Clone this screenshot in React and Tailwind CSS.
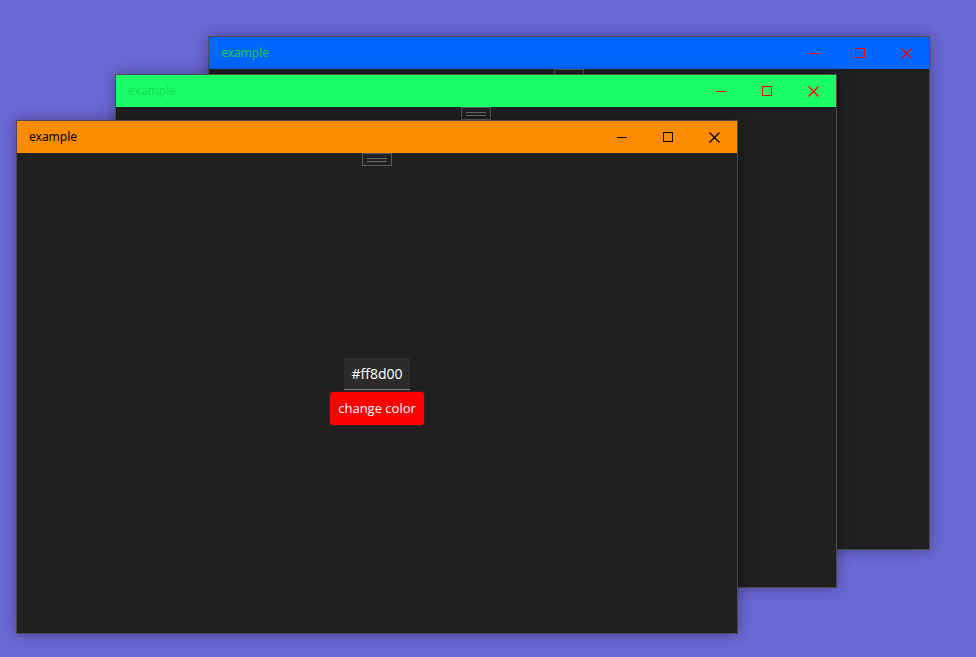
import React from "react";

function Win({ left, top, bar, text, icon, z, children }) {
  return (
    <div
      className="absolute w-[722px] h-[514px] border border-[#4b4b55] bg-[#202020] flex flex-col shadow-[0_0_14px_rgba(0,0,0,0.35)]"
      style={{ left, top, zIndex: z }}
    >
      <div className={`h-8 flex items-center shrink-0 ${bar}`}>
        <span className={`pl-3 text-[12px] font-['Noto_Sans',sans-serif] ${text}`}>example</span>
        <div className="ml-auto flex h-full">
          <div className="w-[46px] h-full flex items-center justify-center">
            <svg width="10" height="10" viewBox="0 0 10 10" shapeRendering="crispEdges">
              <line x1="0" y1="5.5" x2="10" y2="5.5" stroke={icon} strokeWidth="1" />
            </svg>
          </div>
          <div className="w-[46px] h-full flex items-center justify-center">
            <svg width="10" height="10" viewBox="0 0 10 10" shapeRendering="crispEdges">
              <rect x="0.5" y="0.5" width="9" height="9" fill="none" stroke={icon} strokeWidth="1" />
            </svg>
          </div>
          <div className="w-[46px] h-full flex items-center justify-center">
            <svg width="11" height="11" viewBox="0 0 11 11">
              <line x1="0.5" y1="0.5" x2="10.5" y2="10.5" stroke={icon} strokeWidth="1.3" />
              <line x1="10.5" y1="0.5" x2="0.5" y2="10.5" stroke={icon} strokeWidth="1.3" />
            </svg>
          </div>
        </div>
      </div>
      <div className="relative flex-1 flex flex-col items-center justify-center">
        <div className="absolute top-0 left-1/2 -translate-x-1/2 w-[30px] h-[13px] border border-[#5a5a5a] flex flex-col items-center justify-center gap-[2px]">
          <div className="w-5 h-px bg-[#6a6a6a]" />
          <div className="w-5 h-px bg-[#6a6a6a]" />
        </div>
        {children}
      </div>
    </div>
  );
}

export default function App() {
  return (
    <div className="relative w-[976px] h-[657px] bg-[#6c68d6] overflow-hidden font-['Noto_Sans',sans-serif]">
      <Win left={208} top={36} bar="bg-[#0066ff]" text="text-[#1fc83f]" icon="#ff0000" z={1} />
      <Win left={115} top={74} bar="bg-[#1aff66]" text="text-[#16e059]" icon="#ff0000" z={2} />
      <Win left={16} top={120} bar="bg-[#ff8c00]" text="text-black" icon="#000000" z={3}>
        <div className="flex flex-col items-center mt-[-2px]">
          <div className="w-[66px] h-8 bg-[#2b2b2b] border-b border-[#8a8a8a] flex items-center justify-center text-white text-[14px] font-['Open_Sans',sans-serif]">
            #ff8d00
          </div>
          <button className="mt-px w-[96px] h-[35px] bg-[#ff0000] rounded-[4px] border border-[#3a2020] text-white text-[13px] font-['Open_Sans',sans-serif] flex items-center justify-center pt-px">
            change color
          </button>
        </div>
      </Win>
    </div>
  );
}
